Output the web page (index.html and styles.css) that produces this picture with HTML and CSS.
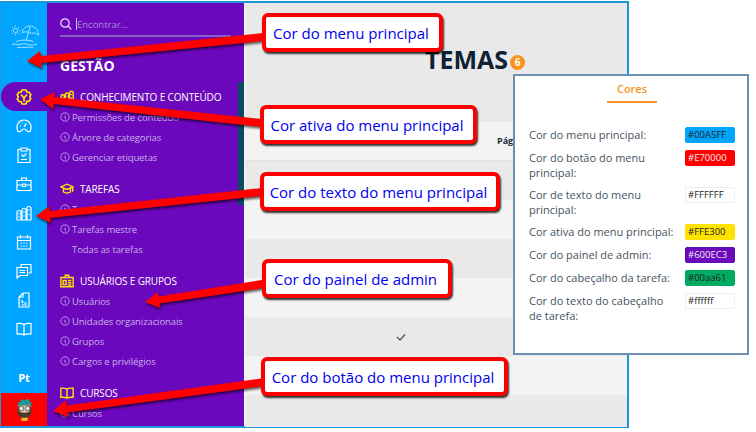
FILE: index.html
```html
<!DOCTYPE html>
<html lang="pt">
<head>
    <meta charset="UTF-8">
    <title>Temas</title>
    <link rel="stylesheet" href="styles.css">
</head>
<body>
    <svg class="icon-defs" width="0" height="0">
        <symbol id="i-buildings" viewBox="0 0 16 16">
            <path d="M1 15V7q0-1.500 2-1.500T5 7v8zM6 15V5q0-1.500 2-1.500T10 5v10zM11 15V3q0-1.500 2-1.500T15 3v12zM.5 15h15M2.300 9h1.400M2.300 12h1.400M7.300 7h1.400M7.300 11h1.400M12.300 5h1.400M12.300 9.500h1.400"/>
        </symbol>
        <symbol id="i-book" viewBox="0 0 16 16">
            <path d="M8 3.500C6.500 2.500 3.500 2.300 1 2.500v10.500c2.500-.2 5.500 0 7 1 1.500-1 4.500-1.200 7-1V2.500c-2.500-.2-5.500 0-7 1zM8 3.500V14"/>
        </symbol>
        <symbol id="i-info" viewBox="0 0 10 10">
            <circle cx="5" cy="5" r="4.200"/>
            <path d="M4.300 4.500h1V7.400M5.200 2.600v.6"/>
        </symbol>
    </svg>

    <div class="window">
        <nav class="rail">
            <svg class="rail-logo" viewBox="0 0 28 24">
                <circle cx="4.500" cy="6.500" r="2.200"/>
                <path d="M4.500 1.500v1.300M4.500 10.200v1.300M-.5 6.500h1.300M8.200 6.500h1.300M1 3l1 1M7 9l1 1M8 3 7 4M2 9l-1 1"/>
                <path d="M11 8.500C12 3 18 .5 23 3c3 1.500 4.500 4.500 4.500 8-3-2-5-2.500-7-1.500-2-1.800-6-2-9.500-1zM19 3l-4 14"/>
                <path d="M5 18c3-2.500 14-2.500 18 0M1 20.500c3-1.500 5 1 8 0s5-1 8 0 5 1 9-.5M6 23.500c3-1 4 .5 8 0s5-.5 8 0"/>
            </svg>
            <a class="rail-item rail-item-active">
                <svg class="rail-icon" viewBox="0 0 16 16"><path d="M6 1h4l.8 2 2.200.3 1.800 2.200-1 2 .9 2.300-1.700 2.400-2.300.2L10 15H6l-.7-2.300-2.300-.2-1.700-2.400.9-2.300-1-2L3 3.300 5.200 3zM5 5.500 8 9l3-3.500M8 9v3.500"/></svg>
            </a>
            <a class="rail-item">
                <svg class="rail-icon" viewBox="0 0 16 16"><path d="M1.500 12.500C-.5 6 3.500 2 8 2s8.500 4 6.500 10.500c-.5 1.500-2.500 1.500-3.500.3C10 11.500 9 11 8 11s-2 .5-3 1.800c-1 1.200-3 1.200-3.500-.3zM8 8.500l2.500-3M3.800 8h1.200M5.500 5h.8"/></svg>
            </a>
            <a class="rail-item">
                <svg class="rail-icon" viewBox="0 0 16 16"><path d="M5 2.500H2v13h12v-13h-3M5 1h6v3H5zM5.500 7.500 7.500 9.500 10.500 6.500M5 12.500h6"/></svg>
            </a>
            <a class="rail-item">
                <svg class="rail-icon" viewBox="0 0 16 16"><path d="M1 4.500h14v10H1zM5.500 4.500V2h5v2.500M1 9h5.500M9.500 9H15M6.500 8h3v2.500h-3z"/></svg>
            </a>
            <a class="rail-item">
                <svg class="rail-icon"><use href="#i-buildings"/></svg>
            </a>
            <a class="rail-item">
                <svg class="rail-icon" viewBox="0 0 16 16"><path d="M1.500 3h13v12h-13zM1.500 6.500h13M4.500 1v3.500M11.500 1v3.500M4.500 9h1.500M7.300 9h1.500M10 9h1.500M4.500 12h1.500M7.300 12h1.500M10 12h1.500"/></svg>
            </a>
            <a class="rail-item">
                <svg class="rail-icon" viewBox="0 0 16 16"><path d="M5 4V1.500h10V10h-2.500M1 4.500h10.500v8H4L1 15zM3.500 7.500h5.500M3.500 9.500h5.500"/></svg>
            </a>
            <a class="rail-item">
                <svg class="rail-icon" viewBox="0 0 16 16"><path d="M7 1h6v14H3V5zM7 1v4H3M5.500 8 7 10l-1.500 1M8 11h3M5.500 13H11"/></svg>
            </a>
            <a class="rail-item">
                <svg class="rail-icon"><use href="#i-book"/></svg>
            </a>
            <div class="rail-lang">Pt</div>
            <div class="rail-user">
                <svg class="avatar" viewBox="0 0 16 22">
                    <path class="avatar-collar" d="M5 18h6v4H5z"/>
                    <path class="avatar-beard" d="M1.500 10h13v4c0 3-3 5-6.500 5s-6.500-2-6.500-5z"/>
                    <path class="avatar-skin" d="M3 7h10v5c0 1.500-2 2-5 2s-5-.5-5-2z"/>
                    <path class="avatar-hair" d="M1.500 10V4.500l2.500-1 1-2.500 3 1.500L11 .5l2 2.500 1.500 1.500V10l-1.500-3H3z"/>
                    <circle class="avatar-lens" cx="5" cy="10" r="2.300"/>
                    <circle class="avatar-lens" cx="11" cy="10" r="2.300"/>
                </svg>
            </div>
        </nav>

        <aside class="panel">
            <div class="search">
                <svg class="search-icon" viewBox="0 0 12 12"><circle cx="5" cy="5" r="4.200"/><path d="m8 8 3.300 3.300"/></svg>
                <span class="search-cursor"></span>
                <span class="search-text">Encontrar...</span>
            </div>
            <h2 class="panel-title">GESTÃO</h2>

            <section class="group">
                <h3 class="group-head"><svg class="group-icon"><use href="#i-buildings"/></svg>CONHECIMENTO E CONTEÚDO</h3>
                <a class="group-link"><svg class="info"><use href="#i-info"/></svg>Permissões de conteúdo</a>
                <a class="group-link"><svg class="info"><use href="#i-info"/></svg>Árvore de categorias</a>
                <a class="group-link"><svg class="info"><use href="#i-info"/></svg>Gerenciar etiquetas</a>
            </section>
            <section class="group">
                <h3 class="group-head">
                    <svg class="group-icon" viewBox="0 0 16 16"><path d="M1 5.500 8 2.500l7 3-7 3zM4 7.500v4c2 1.500 6 1.500 8 0v-4M14.500 6v5"/></svg>TAREFAS
                </h3>
                <a class="group-link"><svg class="info"><use href="#i-info"/></svg>Tarefas</a>
                <a class="group-link"><svg class="info"><use href="#i-info"/></svg>Tarefas mestre</a>
                <a class="group-link group-link-plain">Todas as tarefas</a>
            </section>
            <section class="group">
                <h3 class="group-head">
                    <svg class="group-icon" viewBox="0 0 16 16"><path d="M1 4h14v10.500H1zM6 4V1.500h4V4M3.500 7.500h3.500v4.500H3.500zM9 7.500h4M9 10h4M9 12.500h4"/></svg>USUÁRIOS E GRUPOS
                </h3>
                <a class="group-link"><svg class="info"><use href="#i-info"/></svg>Usuários</a>
                <a class="group-link"><svg class="info"><use href="#i-info"/></svg>Unidades organizacionais</a>
                <a class="group-link"><svg class="info"><use href="#i-info"/></svg>Grupos</a>
                <a class="group-link"><svg class="info"><use href="#i-info"/></svg>Cargos e privilégios</a>
            </section>
            <section class="group">
                <h3 class="group-head"><svg class="group-icon"><use href="#i-book"/></svg>CURSOS</h3>
                <a class="group-link"><svg class="info"><use href="#i-info"/></svg>Cursos</a>
            </section>
            <div class="panel-thumb"></div>
        </aside>

        <main class="content">
            <header class="page-head">
                <h1 class="page-title">TEMAS</h1>
                <span class="page-count">6</span>
            </header>
            <div class="row row-light row-first"><b>Páginas</b></div>
            <div class="row row-dark"></div>
            <div class="row row-light"></div>
            <div class="row row-dark"></div>
            <div class="row row-light"></div>
            <div class="row row-dark row-check">
                <svg class="check" viewBox="0 0 10 8"><path d="m1 4 3 3 5-5.500"/></svg>
            </div>
            <div class="row row-light"></div>
            <div class="row row-dark row-last"></div>
        </main>
    </div>

    <svg class="arrows" viewBox="0 0 756 432">
        <polygon points="27,61 40,51 41,56 263,33 263,41 41,63 42,68"/>
        <polygon points="40,99 55,92 54,97 262,119 262,127 54,104 53,109"/>
        <polygon points="36,216 49,206 50,211 262,188 262,196 50,218 51,223"/>
        <polygon points="145,302 158,292 158.500,296.500 262,280 264,288 159.500,303.500 160,308"/>
        <polygon points="53,411 66,400 66.500,405.500 265,378 265.500,386 67.500,412.500 68,417"/>
    </svg>

    <div class="callout callout-menu">Cor do menu principal</div>
    <div class="callout callout-active">Cor ativa do menu principal</div>
    <div class="callout callout-text">Cor do texto do menu principal</div>
    <div class="callout callout-admin">Cor do painel de admin</div>
    <div class="callout callout-button">Cor do botão do menu principal</div>

    <div class="colors">
        <div class="colors-tab"><span>Cores</span></div>
        <div class="color-row">
            <label>Cor do menu principal:</label>
            <span class="swatch swatch-menu">#00A5FF</span>
        </div>
        <div class="color-row">
            <label>Cor do botão do menu principal:</label>
            <span class="swatch swatch-button">#E70000</span>
        </div>
        <div class="color-row">
            <label>Cor de texto do menu principal:</label>
            <span class="swatch swatch-white">#FFFFFF</span>
        </div>
        <div class="color-row">
            <label>Cor ativa do menu principal:</label>
            <span class="swatch swatch-active">#FFE300</span>
        </div>
        <div class="color-row">
            <label>Cor do painel de admin:</label>
            <span class="swatch swatch-admin">#600EC3</span>
        </div>
        <div class="color-row">
            <label>Cor do cabeçalho da tarefa:</label>
            <span class="swatch swatch-task">#00aa61</span>
        </div>
        <div class="color-row">
            <label>Cor do texto do cabeçalho de tarefa:</label>
            <span class="swatch swatch-white">#ffffff</span>
        </div>
    </div>
</body>
</html>
```

FILE: styles.css
```css
* {
    box-sizing: border-box;
}
html, body {
    height: 100%;
}
body {
    margin: 0;
    padding-top: 1px;
    background-color: white;
    font-family: 'Open Sans', sans-serif;
    overflow: hidden;
}
.icon-defs {
    position: absolute;
}
.window {
    display: flex;
    width: 629px;
    height: 427px;
    border: 2px solid #1e96d8;
    border-left-width: 1px;
    background-color: #e9e9e9;
}

/* left rail */
.rail {
    display: flex;
    flex-direction: column;
    flex: 0 0 46px;
    background-color: #00a5ff;
    color: white;
}
.rail-logo {
    flex: none;
    width: 28px;
    height: 24px;
    margin: 21px 0 34px 10px;
    fill: none;
    stroke: #b4e6ff;
    stroke-width: 0.9;
}
.rail-item {
    display: flex;
    flex: none;
    align-items: center;
    justify-content: center;
    height: 29px;
}
.rail-item-active {
    border-radius: 15px 0 0 15px;
    background-color: #6b07bd;
    color: #ffe300;
}
.rail-item-active .rail-icon {
    stroke-width: 1.700;
}
.rail-icon {
    width: 16px;
    height: 16px;
    fill: none;
    stroke: currentColor;
    stroke-width: 1.200;
}
.rail-lang {
    margin-top: auto;
    padding-bottom: 8px;
    font-size: 11px;
    font-weight: 700;
    text-align: center;
}
.rail-user {
    display: flex;
    align-items: center;
    justify-content: center;
    height: 33px;
    background-color: #ff0000;
}
.avatar {
    width: 17px;
    height: 23px;
}
.avatar-collar {
    fill: #f2b632;
}
.avatar-beard {
    fill: #4a3a30;
}
.avatar-skin {
    fill: #f0c8a0;
}
.avatar-hair {
    fill: #1a9a9a;
}
.avatar-lens {
    fill: #dfe8e8;
    stroke: #444;
    stroke-width: 0.8;
}

/* purple admin panel */
.panel {
    position: relative;
    flex: 0 0 197px;
    padding: 13px 0 0 13px;
    overflow: hidden;
    background-color: #6b07bd;
}
.search {
    display: flex;
    align-items: center;
    width: 171px;
    height: 21px;
    padding-bottom: 3px;
    border-bottom: 2px solid #8460c4;
}
.search-icon {
    width: 12px;
    height: 12px;
    fill: none;
    stroke: #e8e0f4;
    stroke-width: 1.200;
}
.search-cursor {
    width: 1px;
    height: 12px;
    margin-left: 4px;
    background-color: #c9b8e6;
}
.search-text {
    font-size: 9.500px;
    color: #a68fd4;
}
.panel-title {
    margin: 19px 0 12px;
    font-size: 14px;
    line-height: 19px;
    font-weight: 700;
    color: white;
}
.group {
    display: flex;
    flex-direction: column;
    margin-bottom: 12px;
}
.group-head {
    display: flex;
    align-items: center;
    height: 20px;
    margin: 0;
    font-size: 10px;
    font-weight: 400;
    letter-spacing: -0.150px;
    color: white;
}
.group-icon {
    width: 14px;
    height: 14px;
    margin-right: 6px;
    fill: none;
    stroke: #ffe300;
    stroke-width: 1.600;
}
.group-link {
    display: flex;
    align-items: center;
    height: 20px;
    font-size: 9.500px;
    letter-spacing: -0.100px;
    color: #c6b3e6;
}
.group-link-plain {
    padding-left: 12px;
}
.info {
    width: 10px;
    height: 10px;
    margin-right: 2px;
    fill: none;
    stroke: #c6b3e6;
    stroke-width: 0.800;
}
.panel-thumb {
    position: absolute;
    top: 79px;
    right: 0;
    width: 6px;
    height: 123px;
    background-color: #0a4a62;
}

/* main list */
.content {
    flex: 1;
    border-left: 1px solid #f4f4f4;
}
.page-head {
    display: flex;
    align-items: flex-end;
    height: 119px;
    padding: 0 0 48px 180px;
}
.page-title {
    margin: 0;
    font-size: 25px;
    line-height: 30px;
    font-weight: 700;
    color: #0f2233;
}
.page-count {
    width: 15px;
    height: 15px;
    margin: 0 0 4px 2px;
    border-radius: 50%;
    background-color: #f7931e;
    font-size: 10px;
    line-height: 15px;
    font-weight: 700;
    text-align: center;
    color: white;
}
.row {
    height: 39px;
}
.row-light {
    background-color: #f3f3f3;
}
.row-dark {
    background-color: #e9e9e9;
}
.row-first {
    padding: 12px 0 0 252px;
    border-bottom: 1px solid #e2e2e2;
    font-size: 9px;
    line-height: 14px;
    color: #1c2c3a;
}
.row-check {
    display: flex;
    align-items: center;
    padding-left: 151px;
}
.row-last {
    height: 32px;
}
.check {
    width: 10px;
    height: 8px;
    fill: none;
    stroke: #555;
    stroke-width: 1.300;
}

/* annotations laid over the screenshot */
.arrows {
    position: absolute;
    top: 0;
    left: 0;
    width: 756px;
    height: 432px;
    fill: #ff0000;
    filter: drop-shadow(1px 2px 1px rgba(0, 0, 0, 0.6));
}
.callout {
    position: absolute;
    display: flex;
    align-items: center;
    justify-content: center;
    height: 39px;
    padding-right: 3px;
    border: 4px solid #ff0000;
    border-radius: 6px;
    background-color: white;
    box-shadow: 1px 2px 2px rgba(0, 0, 0, 0.8);
    font-size: 15px;
    color: #0000f0;
    white-space: nowrap;
}
.callout-menu {
    top: 13px;
    left: 262px;
    width: 181px;
}
.callout-active {
    top: 105px;
    left: 260px;
    width: 217px;
}
.callout-text {
    top: 172px;
    left: 260px;
    width: 240px;
}
.callout-admin {
    top: 259px;
    left: 262px;
    width: 190px;
}
.callout-button {
    top: 357px;
    left: 261px;
    width: 247px;
}

/* colour settings card */
.colors {
    position: absolute;
    top: 74px;
    left: 513px;
    width: 236px;
    height: 281px;
    padding: 0 12px 0 14px;
    border: 2px solid #6f8fb0;
    background-color: white;
}
.colors-tab {
    display: flex;
    justify-content: center;
    margin-bottom: 24px;
}
.colors-tab span {
    width: 50px;
    height: 27px;
    padding-top: 5px;
    border-bottom: 2px solid #f7931e;
    font-size: 11px;
    line-height: 15px;
    font-weight: 600;
    text-align: center;
    color: #f7931e;
}
.color-row {
    display: flex;
    align-items: flex-start;
    justify-content: space-between;
    margin-bottom: 7px;
}
.color-row label {
    width: 150px;
    font-size: 11px;
    line-height: 15px;
    color: #47545f;
}
.swatch {
    flex: none;
    width: 50px;
    height: 16px;
    padding-left: 2px;
    border: 1px solid #eee;
    border-radius: 2px;
    font-size: 9.500px;
    line-height: 14px;
    color: #222;
}
.swatch-menu {
    border-color: #00a5ff;
    background-color: #00a5ff;
}
.swatch-button {
    border-color: #ff0000;
    background-color: #ff0000;
    color: #eee;
}
.swatch-white {
    background-color: white;
}
.swatch-active {
    border-color: #ffe300;
    background-color: #ffe300;
}
.swatch-admin {
    border-color: #5a0fb5;
    background-color: #6b07bd;
    color: #eee;
}
.swatch-task {
    border-color: #00aa61;
    background-color: #00aa61;
}
```
